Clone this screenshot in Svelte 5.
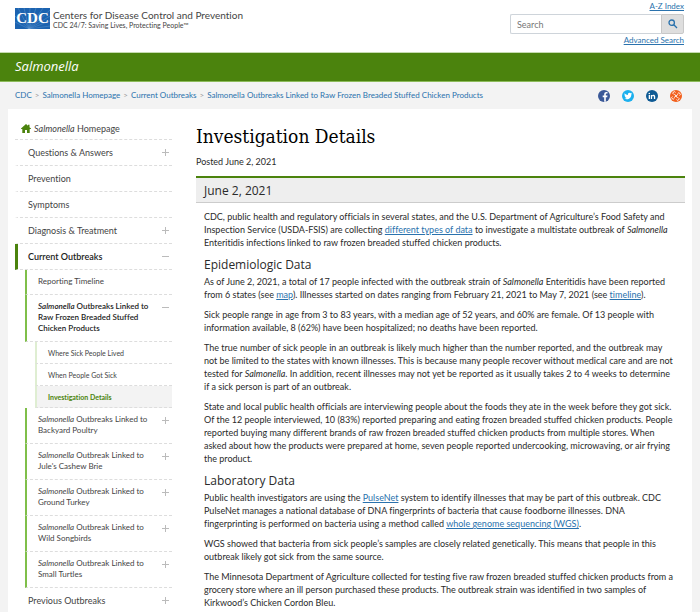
<script lang="ts">
	type NavItem = {
		species?: boolean;
		label: string;
		toggle?: 'plus' | 'minus';
		current?: boolean;
		children?: NavItem[];
	};

	const crumbs = [
		'CDC',
		'Salmonella Homepage',
		'Current Outbreaks',
		'Salmonella Outbreaks Linked to Raw Frozen Breaded Stuffed Chicken Products'
	];

	const nav: NavItem[] = [
		{ label: 'Questions & Answers', toggle: 'plus' },
		{ label: 'Prevention' },
		{ label: 'Symptoms' },
		{ label: 'Diagnosis & Treatment', toggle: 'plus' },
		{
			label: 'Current Outbreaks',
			toggle: 'minus',
			children: [
				{ label: 'Reporting Timeline' },
				{
					species: true,
					label: 'Outbreaks Linked to Raw Frozen Breaded Stuffed Chicken Products',
					toggle: 'minus',
					children: [
						{ label: 'Where Sick People Lived' },
						{ label: 'When People Got Sick' },
						{ label: 'Investigation Details', current: true }
					]
				},
				{ species: true, label: 'Outbreaks Linked to Backyard Poultry', toggle: 'plus' },
				{ species: true, label: "Outbreak Linked to Jule's Cashew Brie", toggle: 'plus' },
				{ species: true, label: 'Outbreak Linked to Ground Turkey', toggle: 'plus' },
				{ species: true, label: 'Outbreak Linked to Wild Songbirds', toggle: 'plus' },
				{ species: true, label: 'Outbreak Linked to Small Turtles', toggle: 'plus' }
			]
		},
		{ label: 'Previous Outbreaks', toggle: 'plus' }
	];

	let query = $state('');
</script>

{#snippet navList(items: NavItem[], level: number)}
	<ul class="level-{level}">
		{#each items as item}
			<li>
				<div class="row" class:open={item.children} class:current={item.current}>
					<a href="#top" aria-current={item.current ? 'page' : undefined}>
						{#if item.species}<em>Salmonella</em>{' '}{/if}{item.label}
					</a>
					{#if item.toggle}
						<button type="button" class="toggle" aria-label="Toggle {item.label}">
							<svg viewBox="0 0 7 7" width="7" height="7">
								<path d={item.toggle === 'plus' ? 'M0 3.5H7M3.5 0V7' : 'M0 3.5H7'} />
							</svg>
						</button>
					{/if}
				</div>
				{#if item.children}
					{@render navList(item.children, level + 1)}
				{/if}
			</li>
		{/each}
	</ul>
{/snippet}

<div class="page" id="top">
	<header class="masthead">
		<a class="brand" href="#top">
			<span class="logo">
				<svg viewBox="0 0 35 21" width="35" height="21" aria-hidden="true">
					<rect width="35" height="21" fill="#1c63b0" />
					<path
						d="M14 21L0 14M14 21L0 8M14 21L3 0M14 21L9 0M14 21L15 0M14 21L21 0M14 21L28 0M14 21L35 2M14 21L35 8M14 21L35 13M14 21L35 18"
						stroke="#6b9fd3"
						stroke-width=".4"
					/>
					<text x="17.5" y="15">CDC</text>
				</svg>
			</span>
			<span class="brand-text">
				<span class="agency">Centers for Disease Control and Prevention</span>
				<span class="tagline">CDC 24/7: Saving Lives, Protecting People™</span>
			</span>
		</a>
		<div class="search-area">
			<a href="#top">A-Z Index</a>
			<form class="search" onsubmit={(e) => e.preventDefault()}>
				<input type="text" placeholder="Search" aria-label="Search" bind:value={query} />
				<button type="submit" aria-label="Submit search">
					<svg viewBox="0 0 10 10" width="10" height="10">
						<circle cx="3.7" cy="3.7" r="2.7" />
						<path d="M5.8 5.8L9 9" />
					</svg>
				</button>
			</form>
			<a href="#top">Advanced Search</a>
		</div>
	</header>

	<div class="site-title"><a href="#top">Salmonella</a></div>

	<div class="crumb-bar">
		<nav aria-label="Breadcrumb">
			<ol>
				{#each crumbs as crumb}
					<li><a href="#top">{crumb}</a></li>
				{/each}
			</ol>
		</nav>
		<div class="social">
			<a href="#top" aria-label="Facebook">
				<svg viewBox="0 0 12 12" width="12" height="12">
					<circle cx="6" cy="6" r="6" fill="#3b5998" />
					<path d="M6.2 11.8V7.2H4.7V5.5h1.5V4.3c0-1.5.9-2.2 2.2-2.2h1.1v1.5h-.8c-.7 0-.9.3-.9.9v1h1.7l-.3 1.7H7.8v4.6z" fill="#fff" />
				</svg>
			</a>
			<a href="#top" aria-label="Twitter">
				<svg viewBox="0 0 12 12" width="12" height="12">
					<circle cx="6" cy="6" r="6" fill="#1cb0ee" />
					<path d="M2.6 3.2c.9 1 2 1.6 3.4 1.7-.3-1.3.5-2.2 1.6-2.2.5 0 .9.2 1.2.5l1-.4-.6.9.9-.2-.8.9c.1 2.8-2 4.9-4.5 4.9-.9 0-1.8-.3-2.5-.7.9.1 1.7-.2 2.3-.7-.7 0-1.3-.5-1.5-1.1h.7c-.8-.2-1.3-.8-1.3-1.6l.7.2c-.7-.5-.9-1.3-.6-2.2z" fill="#fff" />
				</svg>
			</a>
			<a href="#top" aria-label="LinkedIn">
				<svg viewBox="0 0 12 12" width="12" height="12">
					<circle cx="6" cy="6" r="6" fill="#0e5a94" />
					<path d="M2.7 4.9h1.3v4h-1.3zM4.8 4.9H6v.6c.7-1.1 3.2-1 3.2 1v2.4H7.9V6.8c0-1.2-1.8-1.1-1.8 0v2.1H4.8z" fill="#fff" />
					<circle cx="3.3" cy="3.5" r=".8" fill="#fff" />
				</svg>
			</a>
			<a href="#top" aria-label="Syndicate">
				<svg viewBox="0 0 12 12" width="12" height="12">
					<circle cx="6" cy="6" r="6" fill="#f2601d" />
					<g fill="none" stroke="#fff" stroke-width=".9">
						<path d="M6 6L4.3 3.9M6 6L8.1 4.3M6 6L7.7 8.1M6 6L3.9 7.7" />
						<path d="M5.5 2.4A1.4 1.4 0 1 0 3.5 4.3M9.6 5.5A1.4 1.4 0 1 0 7.7 3.5M6.5 9.6A1.4 1.4 0 1 0 8.5 7.7M2.4 6.5A1.4 1.4 0 1 0 4.3 8.5" />
					</g>
				</svg>
			</a>
		</div>
	</div>

	<div class="content">
		<nav class="sidebar" aria-label="Section">
			<a class="home" href="#top">
				<svg viewBox="0 0 10 9" width="10" height="9" aria-hidden="true">
					<path d="M5 0L7 1.8V.8H8.5V3.2L10 4.6V5H8.7V9H6V6H4V9H1.3V5H0V4.6z" fill="#4b830d" />
				</svg>
				<span><em>Salmonella</em> Homepage</span>
			</a>
			{@render navList(nav, 1)}
		</nav>

		<main>
			<h1>Investigation Details</h1>
			<p class="posted">Posted June 2, 2021</p>
			<h2>June 2, 2021</h2>
			<div class="article">
				<p>
					CDC, public health and regulatory officials in several states, and the U.S. Department of Agriculture’s Food Safety and
					Inspection Service (USDA-FSIS) are collecting <a href="#top">different types of data</a> to investigate a multistate outbreak of
					<em>Salmonella</em> Enteritidis infections linked to raw frozen breaded stuffed chicken products.
				</p>
				<h3>Epidemiologic Data</h3>
				<p>
					As of June 2, 2021, a total of 17 people infected with the outbreak strain of <em>Salmonella</em> Enteritidis have been reported
					from 6 states (see <a href="#top">map</a>). Illnesses started on dates ranging from February 21, 2021 to May 7, 2021 (see
					<a href="#top">timeline</a>).
				</p>
				<p>
					Sick people range in age from 3 to 83 years, with a median age of 52 years, and 60% are female. Of 13 people with
					information available, 8 (62%) have been hospitalized; no deaths have been reported.
				</p>
				<p>
					The true number of sick people in an outbreak is likely much higher than the number reported, and the outbreak may
					not be limited to the states with known illnesses. This is because many people recover without medical care and are not
					tested for <em>Salmonella</em>. In addition, recent illnesses may not yet be reported as it usually takes 2 to 4 weeks to determine
					if a sick person is part of an outbreak.
				</p>
				<p>
					State and local public health officials are interviewing people about the foods they ate in the week before they got sick.
					Of the 12 people interviewed, 10 (83%) reported preparing and eating frozen breaded stuffed chicken products. People
					reported buying many different brands of raw frozen breaded stuffed chicken products from multiple stores. When
					asked about how the products were prepared at home, seven people reported undercooking, microwaving, or air frying
					the product.
				</p>
				<h3>Laboratory Data</h3>
				<p>
					Public health investigators are using the <a href="#top">PulseNet</a> system to identify illnesses that may be part of this outbreak. CDC
					PulseNet manages a national database of DNA fingerprints of bacteria that cause foodborne illnesses. DNA
					fingerprinting is performed on bacteria using a method called <a href="#top">whole genome sequencing (WGS)</a>.
				</p>
				<p>
					WGS showed that bacteria from sick people’s samples are closely related genetically. This means that people in this
					outbreak likely got sick from the same source.
				</p>
				<p>
					The Minnesota Department of Agriculture collected for testing five raw frozen breaded stuffed chicken products from a
					grocery store where an ill person purchased these products. The outbreak strain was identified in two samples of
					Kirkwood’s Chicken Cordon Bleu.
				</p>
			</div>
		</main>
	</div>
</div>

<style>
	:global(body) {
		background: #f3f3f3;
	}

	.page {
		display: flex;
		flex-direction: column;
		min-height: 100vh;
		font-family: Lato, 'Open Sans', sans-serif;
		font-size: 9px;
		font-variant-ligatures: none;
		line-height: 13px;
		color: #2a2a2a;
	}

	a {
		color: #2a72ad;
	}

	ul,
	ol {
		list-style: none;
		margin: 0;
		padding: 0;
	}

	button {
		font: inherit;
		cursor: pointer;
	}

	svg {
		display: block;
	}

	.masthead {
		display: flex;
		justify-content: space-between;
		align-items: flex-start;
		padding: 0 16px 5px 15px;
		background: #fff;
	}

	.brand {
		display: flex;
		gap: 3px;
		padding-top: 8px;
		color: #444;
		text-decoration: none;
	}

	.logo text {
		fill: #fff;
		font-family: 'Liberation Serif', serif;
		font-size: 15px;
		font-weight: bold;
		text-anchor: middle;
	}

	.brand-text {
		display: flex;
		flex-direction: column;
	}

	.agency {
		font-size: 10px;
		line-height: 14px;
	}

	.tagline {
		font-size: 7px;
		line-height: 7px;
	}

	.search-area {
		display: flex;
		flex-direction: column;
		align-items: flex-end;
		width: 174px;
		font-size: 8px;
	}

	.search {
		display: flex;
		width: 100%;
		height: 20px;
		margin: 1px 0 0;
		font-size: 9px;
	}

	.search input {
		flex: 1;
		min-width: 0;
		padding: 0 6px;
		border: 1px solid #ced4da;
		border-right: 0;
		border-radius: 2px 0 0 2px;
		font: inherit;
	}

	.search input::placeholder {
		color: #777;
	}

	.search button {
		display: flex;
		align-items: center;
		justify-content: center;
		width: 23px;
		padding: 0;
		border: 1px solid #c8c8c8;
		border-radius: 0 2px 2px 0;
		background: #dedede;
	}

	.search svg {
		fill: none;
		stroke: #2a72ad;
		stroke-width: 1.3;
	}

	.site-title {
		padding: 3px 15px 5px;
		border-top: 1px solid #c5dbb0;
		border-bottom: 1px solid #8cbb5a;
		background: #4b830d;
		font-family: 'Open Sans', sans-serif;
		font-size: 13px;
		line-height: 20px;
		font-style: italic;
	}

	.site-title a {
		color: #fff;
		text-decoration: none;
	}

	.crumb-bar {
		display: flex;
		justify-content: space-between;
		align-items: center;
		height: 27px;
		padding: 0 18px 0 15px;
		font-size: 8px;
	}

	.crumb-bar ol {
		display: flex;
	}

	.crumb-bar li + li::before {
		content: '>';
		padding: 0 3px;
		color: #999;
	}

	.crumb-bar li a {
		text-decoration: none;
	}

	.social {
		display: flex;
		gap: 12px;
	}

	.content {
		flex: 1;
		display: flex;
		gap: 24px;
		margin: 0 8px;
		padding: 0 7px;
		background: #fff;
	}

	.sidebar {
		flex: none;
		width: 157px;
	}

	.sidebar a {
		color: #444;
		text-decoration: none;
	}

	.home {
		display: flex;
		align-items: center;
		gap: 3px;
		padding: 13px 0 4px 6px;
		border-bottom: 1px dashed #ddd;
	}

	.row {
		display: flex;
		align-items: flex-start;
		justify-content: space-between;
		padding: 6px 3px 6px 10px;
		border-left: 2px solid transparent;
		border-bottom: 1px dashed #ddd;
	}

	.row a {
		flex: 1;
	}

	.row.open a {
		color: #222;
		font-weight: 600;
	}

	.toggle {
		padding: 3px 0;
		border: 0;
		background: none;
	}

	.toggle path {
		stroke: #bbb;
	}

	.level-1 > li > .row {
		border-left-width: 3px;
	}

	.level-1 > li > .row.open {
		border-left-color: #4b830d;
	}

	.level-2 {
		padding-left: 10px;
		font-size: 8px;
		line-height: 11px;
	}

	.level-2 > li > .row {
		padding: 6px 3px 7px 11px;
		border-left-color: #7fbf4a;
	}

	.level-2 > li > .row a {
		max-width: 117px;
	}

	.level-3 {
		padding-left: 10px;
		font-size: 7px;
		line-height: 10px;
	}

	.level-3 .row {
		padding: 6px 3px 5px 11px;
		border-left-color: #dfeed2;
	}

	.row.current {
		background: #f3f3f3;
	}

	.row.current a {
		color: #4b830d;
		font-weight: 700;
	}

	main {
		flex: 1;
		min-width: 0;
		padding-top: 14px;
	}

	h1 {
		margin: 0;
		font-family: 'DejaVu Serif Condensed', 'DejaVu Serif', serif;
		font-size: 19px;
		font-weight: normal;
		line-height: 26px;
		color: #000;
	}

	.posted {
		margin: 6px 0 8px;
	}

	h2 {
		margin: 0;
		padding: 4px 8px 3px;
		border-top: 2px solid #4b830d;
		border-bottom: 1px solid #ccc;
		background: #eee;
		font-family: 'Open Sans', sans-serif;
		font-size: 12px;
		font-weight: normal;
		line-height: 17px;
	}

	.article {
		padding: 7px 8px 0;
	}

	.article p {
		margin: 0 0 7px;
	}

	.article p:last-child {
		margin-bottom: 0;
	}

	h3 {
		margin: 0 0 2px;
		font-family: 'Open Sans', sans-serif;
		font-size: 12px;
		font-weight: normal;
		line-height: 17px;
	}
</style>
